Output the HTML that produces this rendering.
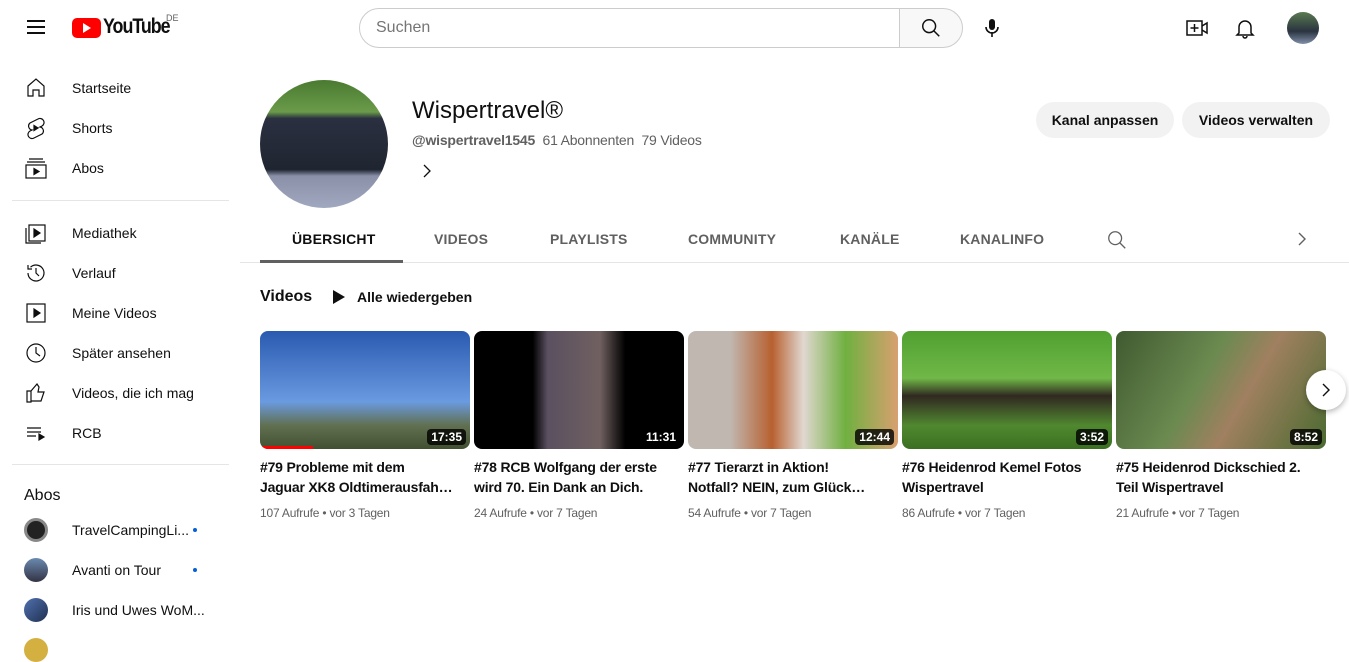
<!DOCTYPE html>
<html><head><meta charset="utf-8"><style>
*{margin:0;padding:0;box-sizing:border-box}
body{width:1349px;height:643px;overflow:hidden;background:#fff;font-family:"Liberation Sans",Arial,sans-serif;color:#0f0f0f;position:relative}
.a{position:absolute}
.nav{font-size:14px;left:72px}
.ico{left:24px;width:24px;height:24px}
.thumb{position:absolute;top:331px;width:210px;height:118px;border-radius:8px;overflow:hidden}
.dur{position:absolute;right:4px;bottom:4px;background:rgba(0,0,0,.8);color:#fff;font-size:12px;font-weight:bold;padding:1px 4px;border-radius:4px}
.title{position:absolute;top:457px;width:205px;font-size:14px;font-weight:bold;line-height:20px;letter-spacing:-0.2px}
.title span{display:block;white-space:nowrap;overflow:hidden}
.meta{position:absolute;top:506px;font-size:12px;color:#606060;letter-spacing:-0.2px}
.tab{position:absolute;top:231px;font-size:14px;font-weight:bold;color:#606060;letter-spacing:.2px}
.btn{position:absolute;top:102px;height:36px;border-radius:18px;background:#f2f2f2;font-size:14px;font-weight:bold;line-height:36px;text-align:center}
</style></head><body>
<div class="a" style="left:27px;top:20px;width:18px;height:2px;background:#0f0f0f;box-shadow:0 6px 0 #0f0f0f,0 12px 0 #0f0f0f"></div>
<div class="a" style="left:72px;top:18px;width:29px;height:20px;background:#f00;border-radius:5px"></div>
<div class="a" style="left:83px;top:23px;width:0;height:0;border-left:8px solid #fff;border-top:5px solid transparent;border-bottom:5px solid transparent"></div>
<div class="a" style="left:103px;top:15px;font-size:21px;font-weight:bold;letter-spacing:-1.2px;transform:scaleX(.85);transform-origin:left">YouTube</div>
<div class="a" style="left:166px;top:13px;font-size:9px;color:#606060">DE</div>
<div class="a" style="left:359px;top:8px;width:541px;height:40px;border:1px solid #ccc;border-radius:20px 0 0 20px;padding-left:16px;line-height:38px;font-size:16px;color:#757575">Suchen</div>
<div class="a" style="left:899px;top:8px;width:64px;height:40px;border:1px solid #ccc;border-radius:0 20px 20px 0;background:#f8f8f8"></div>
<svg class="a" style="left:920px;top:17px" width="22" height="22" viewBox="0 0 24 24" fill="none" stroke="#0f0f0f" stroke-width="1.6"><circle cx="10" cy="10" r="7"/><path d="M15 15l6 6"/></svg>
<svg class="a" style="left:980px;top:16px" width="24" height="24" viewBox="0 0 24 24" fill="#0f0f0f"><rect x="9" y="3" width="6" height="11" rx="3"/><path d="M6 11a6 6 0 0 0 12 0" fill="none" stroke="#0f0f0f" stroke-width="1.6"/><rect x="11.2" y="16" width="1.6" height="5"/></svg>
<svg class="a" style="left:1185px;top:16px" width="24" height="24" viewBox="0 0 24 24" fill="none" stroke="#0f0f0f" stroke-width="1.5"><rect x="2" y="5" width="15" height="14"/><path d="M17 10l5-3v10l-5-3M9.5 8v8M5.5 12h8"/></svg>
<svg class="a" style="left:1233px;top:16px" width="24" height="24" viewBox="0 0 24 24" fill="none" stroke="#0f0f0f" stroke-width="1.5"><path d="M6 17V11a6 6 0 0 1 12 0v6l2 2H4z M10 20a2 2 0 0 0 4 0"/></svg>
<div class="a" style="left:1287px;top:12px;width:32px;height:32px;border-radius:50%;background:linear-gradient(#5a7a50,#2a3340 60%,#8090a8)"></div>
<svg class="a ico" style="top:76px" viewBox="0 0 24 24" fill="none" stroke="#0f0f0f" stroke-width="1.2"><path d="M4 10l8-7 8 7v10h-5v-6H9v6H4z"/></svg><div class="a nav" style="top:80px">Startseite</div>
<svg class="a ico" style="top:116px" viewBox="0 0 24 24" fill="none" stroke="#0f0f0f" stroke-width="1.2"><path d="M14 3l-8 4a4 4 0 0 0 2 7l-2 1a4 4 0 0 0 4 7l8-4a4 4 0 0 0-2-7l2-1a4 4 0 0 0-4-7z"/><path d="M10 9.5v5l4-2.5z" fill="#0f0f0f"/></svg><div class="a nav" style="top:120px">Shorts</div>
<svg class="a ico" style="top:156px" viewBox="0 0 24 24" fill="none" stroke="#0f0f0f" stroke-width="1.2"><path d="M5 3h14M3 6h18"/><rect x="2" y="9" width="20" height="13"/><path d="M10 12.5v6l5-3z" fill="#0f0f0f"/></svg><div class="a nav" style="top:160px">Abos</div>
<div class="a" style="left:12px;top:200px;width:217px;height:1px;background:#e5e5e5"></div>
<svg class="a ico" style="top:221px" viewBox="0 0 24 24" fill="none" stroke="#0f0f0f" stroke-width="1.2"><rect x="5" y="4" width="16" height="16"/><path d="M2 7v15h15"/><path d="M10 8v8l6-4z" fill="#0f0f0f"/></svg><div class="a nav" style="top:225px">Mediathek</div>
<svg class="a ico" style="top:261px" viewBox="0 0 24 24" fill="none" stroke="#0f0f0f" stroke-width="1.2"><path d="M4 12a8 8 0 1 0 2.5-5.8M4 4v4h4M12 7v5l3 3"/></svg><div class="a nav" style="top:265px">Verlauf</div>
<svg class="a ico" style="top:301px" viewBox="0 0 24 24" fill="none" stroke="#0f0f0f" stroke-width="1.2"><rect x="3" y="3" width="18" height="18"/><path d="M10 8v8l6-4z" fill="#0f0f0f"/></svg><div class="a nav" style="top:305px">Meine Videos</div>
<svg class="a ico" style="top:341px" viewBox="0 0 24 24" fill="none" stroke="#0f0f0f" stroke-width="1.2"><circle cx="12" cy="12" r="9"/><path d="M12 6v6l4 3"/></svg><div class="a nav" style="top:345px">Später ansehen</div>
<svg class="a ico" style="top:381px" viewBox="0 0 24 24" fill="none" stroke="#0f0f0f" stroke-width="1.2"><path d="M3 10h4v11H3zM7 20h10l3-9h-6l1-5-2-3-6 7"/></svg><div class="a nav" style="top:385px">Videos, die ich mag</div>
<svg class="a ico" style="top:421px" viewBox="0 0 24 24" fill="none" stroke="#0f0f0f" stroke-width="1.2"><path d="M3 7h14M3 11h14M3 15h9"/><path d="M15 13v6l5-3z" fill="#0f0f0f"/></svg><div class="a nav" style="top:425px">RCB</div>
<div class="a" style="left:12px;top:464px;width:217px;height:1px;background:#e5e5e5"></div>
<div class="a" style="left:24px;top:487px;font-size:16px">Abos</div>
<div class="a" style="left:24px;top:518px;width:24px;height:24px;border-radius:50%;background:#222;border:3px solid #888"></div><div class="a nav" style="top:522px">TravelCampingLi...</div><div class="a" style="left:193px;top:528px;width:4px;height:4px;border-radius:50%;background:#065fd4"></div>
<div class="a" style="left:24px;top:558px;width:24px;height:24px;border-radius:50%;background:linear-gradient(#6a8ab0,#334)"></div><div class="a nav" style="top:562px">Avanti on Tour</div><div class="a" style="left:193px;top:568px;width:4px;height:4px;border-radius:50%;background:#065fd4"></div>
<div class="a" style="left:24px;top:598px;width:24px;height:24px;border-radius:50%;background:linear-gradient(135deg,#5070b0,#203050)"></div><div class="a nav" style="top:602px">Iris und Uwes WoM...</div>
<div class="a" style="left:24px;top:638px;width:24px;height:24px;border-radius:50%;background:#d4b040"></div>
<div class="a" style="left:260px;top:80px;width:128px;height:128px;border-radius:50%;overflow:hidden;background:linear-gradient(#4a7a30 0%,#6a9a4a 25%,#2a3040 30%,#1f2530 70%,#8a90a8 75%,#a0a8c0)"></div>
<div class="a" style="left:412px;top:97px;font-size:24px">Wispertravel®</div>
<div class="a" style="left:412px;top:132px;font-size:14px;color:#606060;letter-spacing:-0.2px"><b>@wispertravel1545</b>&nbsp;&nbsp;61 Abonnenten&nbsp;&nbsp;79 Videos</div>
<svg class="a" style="left:419px;top:163px" width="16" height="16" viewBox="0 0 16 16" fill="none" stroke="#0f0f0f" stroke-width="1.3"><path d="M5 2l6 6-6 6"/></svg>
<div class="btn" style="left:1036px;width:138px">Kanal anpassen</div>
<div class="btn" style="left:1182px;width:148px">Videos verwalten</div>
<div class="tab" style="left:292px;color:#0f0f0f">ÜBERSICHT</div>
<div class="tab" style="left:434px">VIDEOS</div>
<div class="tab" style="left:550px">PLAYLISTS</div>
<div class="tab" style="left:688px">COMMUNITY</div>
<div class="tab" style="left:840px">KANÄLE</div>
<div class="tab" style="left:960px">KANALINFO</div>
<svg class="a" style="left:1106px;top:229px" width="22" height="22" viewBox="0 0 24 24" fill="none" stroke="#606060" stroke-width="1.4"><circle cx="10" cy="10" r="7"/><path d="M15 15l6 6"/></svg>
<svg class="a" style="left:1294px;top:231px" width="16" height="16" viewBox="0 0 16 16" fill="none" stroke="#606060" stroke-width="1.4"><path d="M5 2l6 6-6 6"/></svg>
<div class="a" style="left:240px;top:262px;width:1109px;height:1px;background:#e5e5e5"></div>
<div class="a" style="left:260px;top:260px;width:143px;height:3px;background:#606060"></div>
<div class="a" style="left:260px;top:288px;font-size:16px;font-weight:bold">Videos</div>
<div class="a" style="left:333px;top:290px;width:0;height:0;border-left:12px solid #0f0f0f;border-top:7px solid transparent;border-bottom:7px solid transparent"></div>
<div class="a" style="left:357px;top:289px;font-size:14px;font-weight:bold">Alle wiedergeben</div>
<div class="thumb" style="left:260px;background:linear-gradient(#2a5ab0,#6a9ae0 60%,#607050 80%,#405030)"><div class="a" style="left:0;bottom:0;width:53px;height:3px;background:#f00"></div><span class="dur">17:35</span></div>
<div class="thumb" style="left:474px;background:linear-gradient(90deg,#000 28%,#5a5060 35%,#706060 60%,#000 72%)"><span class="dur">11:31</span></div>
<div class="thumb" style="left:688px;background:linear-gradient(90deg,#c0b8b0 0 20%,#b86030 40%,#e0d8d0 55%,#70b040 75%,#d8a070)"><span class="dur">12:44</span></div>
<div class="thumb" style="left:902px;background:linear-gradient(#50a030,#70b848 40%,#302820 55%,#508830 80%,#3a7020)"><span class="dur">3:52</span></div>
<div class="thumb" style="left:1116px;background:linear-gradient(120deg,#405a30,#6a8a50 40%,#a08060 60%,#4a6a30)"><span class="dur">8:52</span></div>
<div class="a" style="left:1306px;top:370px;width:40px;height:40px;border-radius:50%;background:#fff;box-shadow:0 2px 6px rgba(0,0,0,.3)"></div>
<svg class="a" style="left:1318px;top:382px" width="16" height="16" viewBox="0 0 16 16" fill="none" stroke="#0f0f0f" stroke-width="1.4"><path d="M5 2l6 6-6 6"/></svg>
<div class="title" style="left:260px"><span>#79 Probleme mit dem</span><span>Jaguar XK8 Oldtimerausfah…</span></div>
<div class="title" style="left:474px"><span>#78 RCB Wolfgang der erste</span><span>wird 70. Ein Dank an Dich.</span></div>
<div class="title" style="left:688px"><span>#77 Tierarzt in Aktion!</span><span>Notfall? NEIN, zum Glück…</span></div>
<div class="title" style="left:902px"><span>#76 Heidenrod Kemel Fotos</span><span>Wispertravel</span></div>
<div class="title" style="left:1116px"><span>#75 Heidenrod Dickschied 2.</span><span>Teil Wispertravel</span></div>
<div class="meta" style="left:260px">107 Aufrufe • vor 3 Tagen</div>
<div class="meta" style="left:474px">24 Aufrufe • vor 7 Tagen</div>
<div class="meta" style="left:688px">54 Aufrufe • vor 7 Tagen</div>
<div class="meta" style="left:902px">86 Aufrufe • vor 7 Tagen</div>
<div class="meta" style="left:1116px">21 Aufrufe • vor 7 Tagen</div>
</body></html>
